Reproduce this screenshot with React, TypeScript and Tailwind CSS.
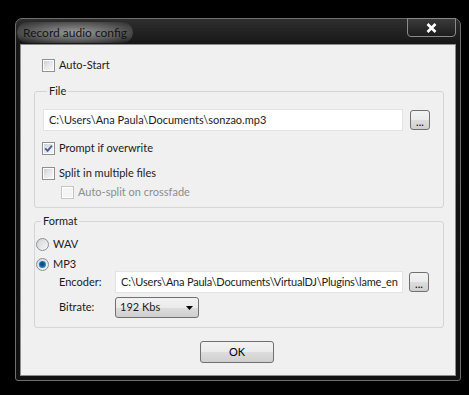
import React from "react";

function CheckBox({ checked, disabled }: { checked?: boolean; disabled?: boolean }) {
  return (
    <span
      className={`flex h-[13px] w-[13px] shrink-0 items-center justify-center border bg-white p-[1px] ${
        disabled ? "border-[#c5c5c5]" : "border-[#8e8f8f]"
      }`}
    >
      <span
        className={`flex h-full w-full items-center justify-center ${
          disabled
            ? "bg-[#f4f4f4]"
            : "bg-[linear-gradient(135deg,#cbcfd5_0%,#e6e8eb_50%,#f6f6f6_100%)]"
        }`}
      >
        {checked && (
          <svg width="9" height="9" viewBox="0 0 9 9">
            <path d="M1.2 4.3 L3.6 6.8 L7.9 1.6" fill="none" stroke="#4a5f97" strokeWidth="1.9" />
          </svg>
        )}
      </span>
    </span>
  );
}

function Radio({ checked }: { checked?: boolean }) {
  return (
    <span className="flex h-[13px] w-[13px] shrink-0 items-center justify-center rounded-full border border-[#8e8f8f] bg-[linear-gradient(135deg,#d2d4d8,#f7f7f7)]">
      {checked && (
        <span className="h-[7px] w-[7px] rounded-full bg-[radial-gradient(circle_at_45%_45%,#0c3b6a_0%,#1a67a6_45%,#5cc3ef_100%)]" />
      )}
    </span>
  );
}

function BrowseButton({ className = "" }: { className?: string }) {
  return (
    <button
      className={`flex h-[20px] w-[20px] shrink-0 items-end justify-center rounded-[3px] border border-[#707070] bg-[linear-gradient(180deg,#f2f2f2_0%,#ebebeb_50%,#dddddd_51%,#cfcfcf_100%)] pb-[3px] text-[11px] leading-[8px] text-black ${className}`}
    >
      ...
    </button>
  );
}

export default function App() {
  return (
    <div className="h-[395px] w-[469px] overflow-hidden bg-black pl-[15px] pt-[18px] font-['Lato',sans-serif] text-[11px] text-[#1b1b1b]">
      <div className="flex h-[363px] w-[446px] flex-col rounded-t-[7px] rounded-b-[3px] border border-[#6e6e6e] bg-[linear-gradient(180deg,#2e2e2e_0%,#161616_26px,#101010_100%)] px-[4px] pb-[4px]">
        {/* title bar */}
        <div className="flex h-[25px] items-start justify-between">
          <span className="ml-[-3px] mt-[3px] rounded-[12px] bg-[radial-gradient(ellipse_at_center,rgba(175,175,175,0.85)_0%,rgba(130,130,130,0.6)_55%,rgba(60,60,60,0)_100%)] px-[6px] py-[2px] text-[12px] leading-[17px] text-[#141414]">
            Record audio config
          </span>
          <button className="mt-[-1px] flex h-[19px] w-[49px] items-center justify-center rounded-b-[4px] border border-[#8a8a8a] bg-[linear-gradient(180deg,#3a3a3a,#1d1d1d)]">
            <svg width="11" height="10" viewBox="0 0 11 10">
              <path d="M1.5 1 L9.5 9 M9.5 1 L1.5 9" stroke="#ffffff" strokeWidth="2.6" />
            </svg>
          </button>
        </div>

        {/* client area */}
        <div className="flex flex-1 flex-col border border-[#8c8c8c] bg-[#f0f0f0] pl-[13px] pt-[14px]">
          <label className="ml-[8px] flex h-[13px] items-center gap-[4px]">
            <CheckBox />
            <span>Auto-Start</span>
          </label>

          <fieldset className="mt-[12px] h-[124px] w-[410px] rounded-[3px] border border-[#d5d5d5] pl-[7px]">
            <legend className="ml-[5px] px-[2px] leading-[14px]">File</legend>
            <div className="mt-[11px] flex items-start">
              <div className="ml-[1px] flex h-[22px] w-[360px] items-center overflow-hidden whitespace-nowrap border border-[#e3e3e3] bg-white pl-[5px]">
                C:\Users\Ana Paula\Documents\sonzao.mp3
              </div>
              <BrowseButton className="ml-[7px] mt-[1px]" />
            </div>
            <label className="mt-[11px] flex h-[13px] items-center gap-[4px]">
              <CheckBox checked />
              <span>Prompt if overwrite</span>
            </label>
            <label className="mt-[12px] flex h-[13px] items-center gap-[4px]">
              <CheckBox />
              <span>Split in multiple files</span>
            </label>
            <label className="ml-[19px] mt-[6px] flex h-[13px] items-center gap-[4px] text-[#8d8d8d]">
              <CheckBox disabled />
              <span>Auto-split on crossfade</span>
            </label>
          </fieldset>

          <fieldset className="mt-[6px] h-[114px] w-[410px] rounded-[3px] border border-[#d5d5d5] pl-[1px]">
            <legend className="ml-[5px] px-[2px] leading-[14px]">Format</legend>
            <label className="mt-[10px] flex h-[13px] items-center gap-[4px]">
              <Radio />
              <span>WAV</span>
            </label>
            <label className="mt-[7px] flex h-[13px] items-center gap-[4px]">
              <Radio checked />
              <span>MP3</span>
            </label>
            <div className="flex items-center">
              <span className="ml-[23px] w-[56px]">Encoder:</span>
              <div className="flex h-[22px] w-[288px] items-center overflow-hidden whitespace-nowrap border border-[#e3e3e3] bg-white pl-[5px] tracking-[-0.2px]">
                C:\Users\Ana Paula\Documents\VirtualDJ\Plugins\lame_en
              </div>
              <BrowseButton className="ml-[6px] h-[19px]" />
            </div>
            <div className="mt-[4px] flex items-center">
              <span className="ml-[23px] w-[56px]">Bitrate:</span>
              <div className="flex h-[21px] w-[84px] items-center justify-between rounded-[3px] border border-[#707070] bg-[linear-gradient(180deg,#f2f2f2_0%,#ebebeb_50%,#dddddd_51%,#cfcfcf_100%)] pl-[4px] pr-[5px]">
                <span>192 Kbs</span>
                <svg width="7" height="4" viewBox="0 0 7 4">
                  <path d="M0 0 H7 L3.5 4 Z" fill="#000" />
                </svg>
              </div>
            </div>
          </fieldset>

          <div className="mt-[13px] flex">
            <button className="ml-[166px] h-[22px] w-[74px] rounded-[3px] border border-[#707070] bg-[linear-gradient(180deg,#f2f2f2_0%,#ebebeb_50%,#dddddd_51%,#cfcfcf_100%)] text-black">
              OK
            </button>
          </div>
        </div>
      </div>
    </div>
  );
}
